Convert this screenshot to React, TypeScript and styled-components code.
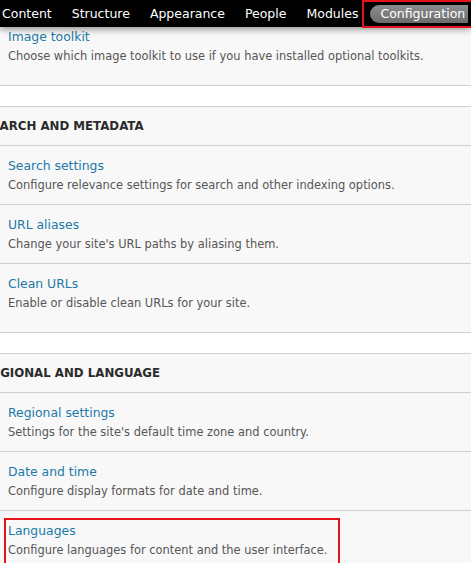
import * as React from "react";
import styled, { createGlobalStyle } from "styled-components";

const Global = createGlobalStyle`
  html, body {
    margin: 0;
    padding: 0;
    background: #fff;
    overflow: hidden;
  }
  body {
    font-family: "DejaVu Sans", Verdana, sans-serif;
  }
`;

const S = {
  Page: styled.div`
    position: relative;
    width: 471px;
    height: 563px;
    overflow: hidden;
  `,
  Toolbar: styled.nav`
    position: absolute;
    top: 0;
    left: 0;
    right: 0;
    z-index: 2;
    height: 27px;
    background: #000;
    display: flex;
    align-items: center;
    gap: 20px;
    padding-left: 2px;
    box-shadow: 0 2px 7px rgba(0, 0, 0, 0.45);
  `,
  Tab: styled.a<{ $active?: boolean }>`
    position: relative;
    color: #fff;
    font-size: 12.5px;
    line-height: 18px;
    text-decoration: none;
    white-space: nowrap;
    ${(p) =>
      p.$active &&
      `
      margin-left: -8px;
      padding: 0 3px 0 10px;
      background: linear-gradient(#8c8c8c, #6c6c6c);
      border-radius: 10px 0 0 10px;
      `}
  `,
  Highlight: styled.span<{ $inset: string }>`
    position: absolute;
    inset: ${(p) => p.$inset};
    border: 2px solid #e3141b;
    pointer-events: none;
  `,
  Content: styled.main`
    padding-top: 17px;
    display: flex;
    flex-direction: column;
    gap: 20px;
  `,
  Panel: styled.section<{ $hiddenTop?: boolean }>`
    background: #f8f8f8;
    border-top: ${(p) => (p.$hiddenTop ? "none" : "1px solid #cfcfcf")};
    border-bottom: 1px solid #cfcfcf;
  `,
  PanelTitle: styled.h3`
    margin: 0 0 0 -17px;
    height: 38px;
    display: flex;
    align-items: center;
    border-bottom: 1px solid #cfcfcf;
    font-size: 11.8px;
    font-weight: bold;
    color: #2b2b2b;
    text-transform: uppercase;
  `,
  Item: styled.div`
    position: relative;
    height: 59px;
    padding: 10px 8px 0;
    box-sizing: border-box;
    border-bottom: 1px solid #cfcfcf;
    &:last-child {
      height: 68px;
      border-bottom: none;
    }
  `,
  ItemLink: styled.a`
    display: block;
    font-size: 12.4px;
    line-height: 20px;
    color: #2178a8;
    text-decoration: none;
  `,
  ItemText: styled.div`
    font-size: 11.45px;
    line-height: 19px;
    color: #565656;
  `,
};

type Entry = { title: string; text: string; marked?: boolean };
type Group = { title?: string; hiddenTop?: boolean; items: Entry[] };

const groups: Group[] = [
  {
    hiddenTop: true,
    items: [
      {
        title: "Image toolkit",
        text: "Choose which image toolkit to use if you have installed optional toolkits.",
      },
    ],
  },
  {
    title: "Search and metadata",
    items: [
      {
        title: "Search settings",
        text: "Configure relevance settings for search and other indexing options.",
      },
      { title: "URL aliases", text: "Change your site's URL paths by aliasing them." },
      { title: "Clean URLs", text: "Enable or disable clean URLs for your site." },
    ],
  },
  {
    title: "Regional and language",
    items: [
      {
        title: "Regional settings",
        text: "Settings for the site's default time zone and country.",
      },
      { title: "Date and time", text: "Configure display formats for date and time." },
      {
        title: "Languages",
        text: "Configure languages for content and the user interface.",
        marked: true,
      },
    ],
  },
];

const tabs = ["Content", "Structure", "Appearance", "People", "Modules"];

const App: React.FC = () => {
  return (
    <S.Page>
      <Global />
      <S.Toolbar>
        {tabs.map((t) => (
          <S.Tab key={t} href="#">
            {t}
          </S.Tab>
        ))}
        <S.Tab href="#" $active>
          Configuration
          <S.Highlight $inset="-5px -6px -5px -8px" />
        </S.Tab>
      </S.Toolbar>
      <S.Content>
        {groups.map((g, i) => (
          <S.Panel key={i} $hiddenTop={g.hiddenTop}>
            {g.title && <S.PanelTitle>{g.title}</S.PanelTitle>}
            {g.items.map((it) => (
              <S.Item key={it.title}>
                <S.ItemLink href="#">{it.title}</S.ItemLink>
                <S.ItemText>{it.text}</S.ItemText>
                {it.marked && <S.Highlight $inset="7px 131px -20px 4px" />}
              </S.Item>
            ))}
          </S.Panel>
        ))}
      </S.Content>
    </S.Page>
  );
};

export default App;
